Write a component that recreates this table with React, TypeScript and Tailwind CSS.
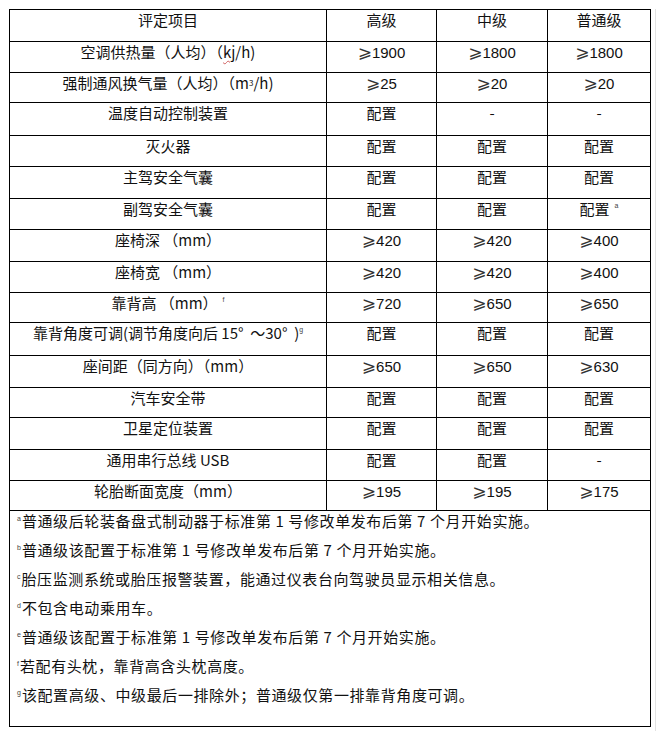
import React from "react";

type Cell = React.ReactNode;

const GE = "⩾";

const Sup = ({ c, className = "" }: { c: string; className?: string }) => (
  <span
    className={
      "inline-block align-top text-[7px] leading-[8px] text-[#444] mt-[3px] " +
      className
    }
    style={{ fontFamily: '"Liberation Sans", sans-serif' }}
  >
    {c}
  </span>
);

const Num = ({ v }: { v: string }) => (
  <span className="whitespace-nowrap">
    <span
      style={{ fontFamily: '"DejaVu Sans", "Noto Sans CJK SC", sans-serif' }}
      className="text-[17px] leading-[20px] text-[#333]"
    >
      {GE}
    </span>
    <span style={{ fontFamily: '"Liberation Sans", sans-serif' }}>{v}</span>
  </span>
);

const rows: { h: string; cells: Cell[] }[] = [
  { h: "h-[32px]", cells: ["评定项目", "高级", "中级", "普通级"] },
  {
    h: "h-[31px]",
    cells: [
      <span>
        空调供热量（人均）（
        <span className="underline decoration-wavy decoration-[#d06060] decoration-1 underline-offset-2">kj</span>
        /h)
      </span>,
      <Num v="1900" />,
      <Num v="1800" />,
      <Num v="1800" />,
    ],
  },
  {
    h: "h-[30px]",
    cells: [
      <span>
        强制通风换气量（人均）（m<span className="text-[8px] align-top">3</span>/h)
      </span>,
      <Num v="25" />,
      <Num v="20" />,
      <Num v="20" />,
    ],
  },
  { h: "h-[33px]", cells: ["温度自动控制装置", "配置", "-", "-"] },
  { h: "h-[31px]", cells: ["灭火器", "配置", "配置", "配置"] },
  { h: "h-[32px]", cells: ["主驾安全气囊", "配置", "配置", "配置"] },
  {
    h: "h-[31px]",
    cells: [
      "副驾安全气囊",
      "配置",
      "配置",
      <span>
        配置<Sup c="a" className="ml-[5px]" />
      </span>,
    ],
  },
  { h: "h-[32px]", cells: ["座椅深 （mm）", <Num v="420" />, <Num v="420" />, <Num v="400" />] },
  { h: "h-[31px]", cells: ["座椅宽 （mm）", <Num v="420" />, <Num v="420" />, <Num v="400" />] },
  {
    h: "h-[30px]",
    cells: [
      <span>
        靠背高 （mm）<Sup c="f" className="ml-[5px]" />
      </span>,
      <Num v="720" />,
      <Num v="650" />,
      <Num v="650" />,
    ],
  },
  {
    h: "h-[33px]",
    cells: [
      <span className="whitespace-nowrap">
        靠背角度可调(调节角度向后 15°&nbsp;&nbsp;～30°&nbsp;&nbsp;)<Sup c="g" />
      </span>,
      "配置",
      "配置",
      "配置",
    ],
  },
  { h: "h-[32px]", cells: ["座间距（同方向）（mm）", <Num v="650" />, <Num v="650" />, <Num v="630" />] },
  { h: "h-[30px]", cells: ["汽车安全带", "配置", "配置", "配置"] },
  { h: "h-[32px]", cells: ["卫星定位装置", "配置", "配置", "配置"] },
  { h: "h-[31px]", cells: ["通用串行总线 USB", "配置", "配置", "-"] },
  { h: "h-[30px]", cells: ["轮胎断面宽度（mm）", <Num v="195" />, <Num v="195" />, <Num v="175" />] },
];

const notes: [string, string][] = [
  ["a", "普通级后轮装备盘式制动器于标准第 1 号修改单发布后第 7 个月开始实施。"],
  ["b", "普通级该配置于标准第 1 号修改单发布后第 7 个月开始实施。"],
  ["c", "胎压监测系统或胎压报警装置，能通过仪表台向驾驶员显示相关信息。"],
  ["d", "不包含电动乘用车。"],
  ["e", "普通级该配置于标准第 1 号修改单发布后第 7 个月开始实施。"],
  ["f", "若配有头枕，靠背高含头枕高度。"],
  ["g", "该配置高级、中级最后一排除外；普通级仅第一排靠背角度可调。"],
];

const widths = ["w-[317px]", "w-[110px]", "w-[111px]", "w-[103px]"];

export default function App() {
  return (
    <div
      className="w-[659px] h-[738px] bg-white text-[#111] text-[15px] pt-[9px] pl-[9px]"
      style={{ fontFamily: '"Noto Sans CJK SC", "Liberation Sans", sans-serif' }}
    >
      <div className="w-[647px] h-[722px] border-r border-[#e2e2e2]">
        <div className="w-[642px] border-l border-t border-black">
          {rows.map((r, i) => (
            <div key={i} className={"flex " + r.h}>
              {r.cells.map((c, j) => (
                <div
                  key={j}
                  className={
                    widths[j] +
                    " shrink-0 border-r border-b border-black flex justify-center items-start leading-[20px]"
                  }
                >
                  {c}
                </div>
              ))}
            </div>
          ))}
          <div className="border-r border-b border-black pl-[7px] pb-[11px] h-[216px]">
            {notes.map(([k, t]) => (
              <div key={k} className="h-[29px] leading-[20px] flex items-start">
                <Sup c={k} className="mr-[1px] mt-[4px]" />
                <span className="tracking-[0.6px]">{t}</span>
              </div>
            ))}
          </div>
        </div>
      </div>
    </div>
  );
}
